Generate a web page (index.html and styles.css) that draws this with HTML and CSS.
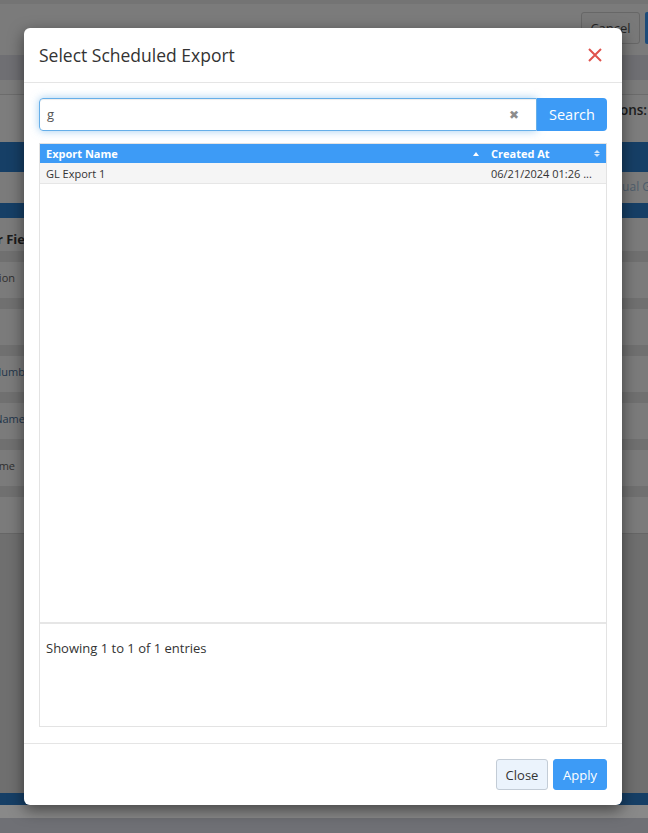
FILE: index.html
```html
<!DOCTYPE html>
<html>
<head>
<meta charset="utf-8">
<link rel="stylesheet" href="styles.css">
</head>
<body>
<div class="page">
  <div class="topbar">
    <div class="top-actions">
      <span class="bg-btn">Cancel</span>
      <span class="bg-btn-blue"></span>
    </div>
  </div>
  <div class="band"></div>
  <div class="strip"></div>
  <div class="options-row"><span class="options-text">Options:</span></div>
  <div class="blue-band"></div>
  <div class="sub-row"><span class="sub-text">Manual G</span></div>
  <div class="blue-band thin"></div>
  <div class="field-head"><span class="lbl lbl-wide">r Fie</span></div>
  <div class="sep"></div>
  <div class="field-row"><span class="lbl lbl-short">tion</span></div>
  <div class="sep"></div>
  <div class="field-row"></div>
  <div class="sep"></div>
  <div class="field-row"><span class="lbl lbl-wide lbl-blue">Numb</span></div>
  <div class="sep"></div>
  <div class="field-row"><span class="lbl lbl-wide lbl-blue">lName</span></div>
  <div class="sep"></div>
  <div class="field-row"><span class="lbl lbl-short">me</span></div>
  <div class="sep"></div>
  <div class="field-row"></div>
  <div class="filler"></div>
  <div class="blue-band bottom"></div>
  <div class="bottom-strip"></div>
  <div class="bottom-bar"></div>
</div>

<div class="modal">
  <div class="modal-header">
    <h4 class="modal-title">Select Scheduled Export</h4>
    <span class="modal-close">
      <svg width="14" height="14" viewBox="0 0 14 14"><path d="M1 1L13 13M13 1L1 13" stroke="#e0534d" stroke-width="2" fill="none"/></svg>
    </span>
  </div>
  <div class="modal-body">
    <div class="search-group">
      <div class="search-input">
        <span class="search-value">g</span>
        <span class="clear-icon">✖</span>
      </div>
      <button class="search-btn">Search</button>
    </div>
    <div class="grid">
      <div class="grid-head">
        <div class="col col-name">Export Name<span class="sort-up"></span></div>
        <div class="col col-date">Created At<span class="sort-both"><i class="tri-up"></i><i class="tri-down"></i></span></div>
      </div>
      <div class="grid-row">
        <div class="col col-name">GL Export 1</div>
        <div class="col col-date">06/21/2024 01:26 ...</div>
      </div>
      <div class="grid-scroll"></div>
      <div class="grid-info">Showing 1 to 1 of 1 entries</div>
    </div>
  </div>
  <div class="modal-footer">
    <button class="btn btn-close">Close</button>
    <button class="btn btn-apply">Apply</button>
  </div>
</div>
</body>
</html>
```
FILE: styles.css
```css
* { box-sizing: border-box; }
html, body { margin: 0; padding: 0; }
body {
  width: 648px;
  height: 833px;
  overflow: hidden;
  font-family: "Open Sans", "Liberation Sans", sans-serif;
  background: #7c7c7c;
  position: relative;
}
.page {
  display: flex;
  flex-direction: column;
  height: 833px;
  color: #1a1a1a;
  font-size: 13px;
}
.topbar {
  height: 55px;
  background: #7b7b7b;
  border-top: 4px solid #747474;
  display: flex;
  justify-content: flex-end;
  align-items: flex-start;
  padding-top: 8px;
}
.top-actions { display: flex; gap: 5px; }
.bg-btn {
  width: 59px;
  height: 32px;
  border: 1px solid #676767;
  border-radius: 3px;
  background: #797979;
  color: #262626;
  font-size: 13px;
  display: flex;
  align-items: center;
  justify-content: center;
}
.bg-btn-blue {
  width: 3px;
  height: 32px;
  background: #1d4b79;
  border-radius: 2px 0 0 2px;
}
.band { height: 25px; background: #6f6f73; }
.strip { height: 15px; background: #7b7b7b; border-bottom: 1px solid #6c6c6c; }
.options-row {
  height: 47px;
  background: #7d7d7d;
  display: flex;
  justify-content: flex-end;
  align-items: flex-start;
  overflow: hidden;
}
.options-text {
  font-weight: 600;
  color: #1c1c1c;
  font-size: 13.5px;
  margin-top: 6px;
  margin-right: 1px;
}
.blue-band { height: 30px; background: #163f66; }
.blue-band.thin { height: 15px; }
.blue-band.bottom { height: 12px; }
.sub-row {
  height: 31px;
  background: #7b7b7b;
  display: flex;
  justify-content: flex-end;
  align-items: flex-start;
  overflow: hidden;
}
.sub-text {
  color: #4e5d6c;
  font-size: 12px;
  margin-right: -3px;
  margin-top: 6px;
}
.field-head {
  height: 33px;
  background: #7b7b7b;
  display: flex;
  align-items: flex-end;
  padding-bottom: 3px;
  overflow: hidden;
}
.field-head .lbl {
  font-weight: 700;
  font-size: 13px;
  color: #1a1a1a;
}
.sep { height: 11px; background: #707070; }
.field-row {
  height: 36px;
  background: #7b7b7b;
  display: flex;
  align-items: center;
  padding-bottom: 5px;
  overflow: hidden;
}
.lbl {
  display: flex;
  justify-content: flex-end;
  white-space: nowrap;
  font-size: 11px;
  color: #2f2f2f;
}
.lbl-wide { width: 25px; }
.lbl-short { width: 15px; }
.lbl-blue { color: #22354a; }
.filler { flex: 1; background: #6f6f6f; border-top: 1px solid #666; }
.bottom-strip { height: 13px; background: #898989; }
.bottom-bar { height: 15px; background: #6f7075; }

.modal {
  position: absolute;
  left: 24px;
  top: 28px;
  width: 598px;
  height: 777px;
  background: #fff;
  border-radius: 6px;
  box-shadow: 0 5px 15px rgba(0,0,0,.5);
  display: flex;
  flex-direction: column;
  color: #333;
}
.modal-header {
  height: 55px;
  border-bottom: 1px solid #e5e5e5;
  display: flex;
  align-items: center;
  justify-content: space-between;
  padding: 0 20px 0 15px;
}
.modal-title {
  margin: 0;
  font-size: 17.5px;
  font-weight: 400;
  color: #333;
}
.modal-close { display: flex; margin-top: -1px; }
.modal-body {
  flex: 1;
  padding: 15px 15px 16px;
  display: flex;
  flex-direction: column;
  gap: 12px;
}
.search-group { display: flex; height: 33px; }
.search-input {
  flex: 1;
  border: 1px solid #66afe9;
  border-radius: 4px 0 0 4px;
  box-shadow: inset 0 1px 1px rgba(0,0,0,.075), 0 0 8px rgba(102,175,233,.6);
  display: flex;
  align-items: center;
  justify-content: space-between;
  padding: 0 17px 0 7px;
}
.search-value { font-size: 13px; color: #555; margin-top: -1px; }
.clear-icon { font-size: 12px; color: #8c8c8c; }
.search-btn {
  width: 70px;
  border: none;
  background: #3d9bf6;
  color: #fff;
  font-family: inherit;
  font-size: 14.5px;
  border-radius: 0 4px 4px 0;
  padding: 0;
}
.grid {
  flex: 1;
  border: 1px solid #e3e3e3;
  display: flex;
  flex-direction: column;
}
.grid-head {
  display: flex;
  height: 19px;
  background: #3d9bf6;
  color: #fff;
  font-weight: 700;
  font-size: 11px;
}
.col {
  display: flex;
  align-items: center;
  padding: 0 6px;
  white-space: nowrap;
}
.col-name { flex: 1; justify-content: space-between; }
.col-date { width: 121px; justify-content: space-between; }
.sort-up {
  width: 0; height: 0;
  border-left: 3.5px solid transparent;
  border-right: 3.5px solid transparent;
  border-bottom: 4px solid #fff;
}
.sort-both { display: flex; flex-direction: column; gap: 1px; }
.tri-up {
  width: 0; height: 0;
  border-left: 3px solid transparent;
  border-right: 3px solid transparent;
  border-bottom: 3px solid rgba(255,255,255,.75);
}
.tri-down {
  width: 0; height: 0;
  border-left: 3px solid transparent;
  border-right: 3px solid transparent;
  border-top: 3px solid rgba(255,255,255,.75);
}
.grid-row {
  display: flex;
  height: 21px;
  background: #f5f5f5;
  border-bottom: 1px solid #e6e6e6;
  font-size: 11px;
  color: #333;
}
.grid-row .col-date { justify-content: flex-start; }
.grid-scroll { flex: 1; border-bottom: 2px solid #e6e6e6; }
.grid-info {
  height: 102px;
  padding: 15px 6px 0;
  font-size: 13px;
  color: #333;
}
.modal-footer {
  height: 62px;
  border-top: 1px solid #e5e5e5;
  display: flex;
  justify-content: flex-end;
  align-items: center;
  gap: 5px;
  padding: 0 15px;
}
.btn {
  height: 31px;
  font-family: inherit;
  font-size: 13px;
  border-radius: 3px;
  padding: 0;
}
.btn-close {
  width: 52px;
  background: #ebf3fc;
  border: 1px solid #c3ccd6;
  color: #333;
}
.btn-apply {
  width: 54px;
  background: #3d9bf6;
  border: 1px solid #3d9bf6;
  color: #fff;
}
```
